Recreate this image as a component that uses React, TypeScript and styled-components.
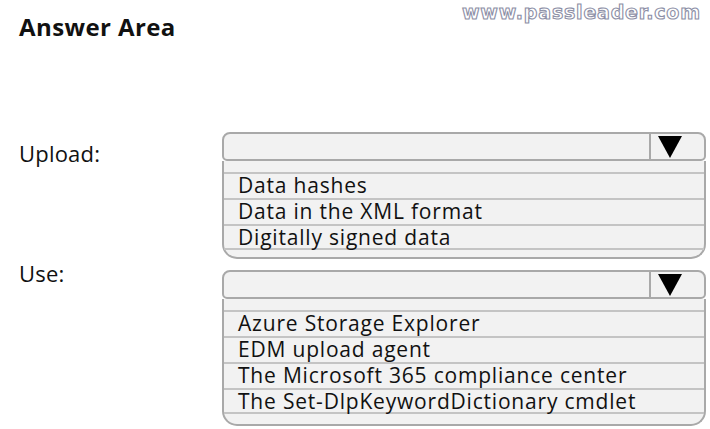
import React from "react";
import styled, { createGlobalStyle } from "styled-components";

const Global = createGlobalStyle`
  html, body { margin: 0; padding: 0; background: #ffffff; }
  body { font-family: "Open Sans", "Noto Sans", Arial, sans-serif; color: #111; }
`;

const Page = styled.div`
  position: relative;
  width: 710px;
  height: 429px;
  padding: 11px 0 0 19px;
  box-sizing: border-box;
  overflow: hidden;
`;

const Watermark = styled.div`
  position: absolute;
  top: 1px;
  left: 462px;
  font-family: "DejaVu Sans", sans-serif;
  font-weight: 700;
  font-size: 19px;
  line-height: 22px;
  letter-spacing: 0.8px;
  color: #ffffff;
  -webkit-text-stroke: 1.1px #8d8fa6;
  white-space: nowrap;
`;

const Title = styled.h1`
  margin: 0;
  font-family: "Open Sans", sans-serif;
  font-weight: 700;
  font-size: 24px;
  letter-spacing: 0.4px;
  line-height: 32px;
  color: #111;
`;

const Form = styled.div`
  display: grid;
  grid-template-columns: 203px 484px;
  row-gap: 11px;
  margin-top: 89px;
`;

const Label = styled.div<{ $offset: number }>`
  font-size: 22px;
  letter-spacing: 0.2px;
  line-height: 28px;
  margin-top: ${(p) => p.$offset}px;
  color: #111;
`;

const Dropdown = styled.div`
  display: flex;
  flex-direction: column;
`;

const Header = styled.div`
  display: flex;
  height: 29px;
  box-sizing: border-box;
  border: 2px solid #a9a9a9;
  border-radius: 8px 8px 5px 5px;
  background: #f2f2f2;
`;

const Field = styled.div`
  flex: 1;
`;

const ArrowButton = styled.div`
  width: 55px;
  box-sizing: border-box;
  border-left: 2px solid #a9a9a9;
  display: flex;
  align-items: flex-end;
  padding: 0 0 1px 7px;
`;

const List = styled.div<{ $bottom: number }>`
  border: 2px solid #a9a9a9;
  border-top: none;
  border-radius: 0 0 15px 15px;
  background: #f2f2f2;
  padding: 11px 0 ${(p) => p.$bottom}px;
`;

const Option = styled.div`
  height: 26px;
  box-sizing: border-box;
  border-top: 2px solid #c4c4c4;
  padding-left: 14px;
  font-size: 21px;
  letter-spacing: 0.8px;
  line-height: 23px;
  color: #111;
  white-space: nowrap;
  &:last-child {
    border-bottom: 2px solid #c4c4c4;
  }
`;

const Arrow = () => (
  <svg width="24" height="22" viewBox="0 0 24 22">
    <polygon points="0,0 24,0 12,22" fill="#000" />
  </svg>
);

type Item = { label: string; offset: number; options: string[]; bottom: number };

const items: Item[] = [
  {
    label: "Upload:",
    offset: 7,
    bottom: 7,
    options: ["Data hashes", "Data in the XML format", "Digitally signed data"],
  },
  {
    label: "Use:",
    offset: -11,
    bottom: 10,
    options: [
      "Azure Storage Explorer",
      "EDM upload agent",
      "The Microsoft 365 compliance center",
      "The Set-DlpKeywordDictionary cmdlet",
    ],
  },
];

export default function App() {
  return (
    <>
      <Global />
      <Page>
        <Watermark>www.passleader.com</Watermark>
        <Title>Answer Area</Title>
        <Form>
          {items.map((it) => (
            <React.Fragment key={it.label}>
              <Label $offset={it.offset}>{it.label}</Label>
              <Dropdown>
                <Header>
                  <Field />
                  <ArrowButton>
                    <Arrow />
                  </ArrowButton>
                </Header>
                <List $bottom={it.bottom}>
                  {it.options.map((o) => (
                    <Option key={o}>{o}</Option>
                  ))}
                </List>
              </Dropdown>
            </React.Fragment>
          ))}
        </Form>
      </Page>
    </>
  );
}
